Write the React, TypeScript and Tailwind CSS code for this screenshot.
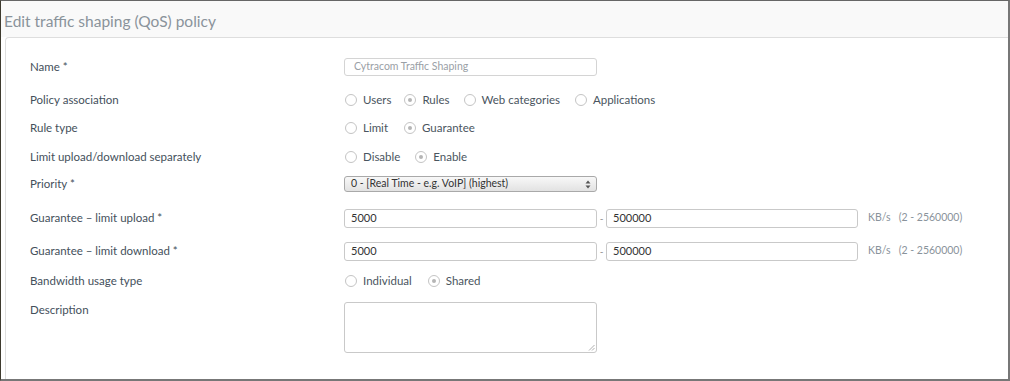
import React from 'react';

function Radio({ label, checked = false, className = '' }: { label: string; checked?: boolean; className?: string }) {
  return (
    <label className={`flex items-center gap-[6px] ${className}`}>
      <span className="w-[12px] h-[12px] rounded-full border border-[#c4c4c4] bg-white flex items-center justify-center">
        {checked && <span className="w-[4px] h-[4px] rounded-full bg-[#b5b5b5]" />}
      </span>
      <span className="text-[11.5px] text-[#4a5560]">{label}</span>
    </label>
  );
}

function Row({ label, children, className = '' }: { label: string; children: React.ReactNode; className?: string }) {
  return (
    <div className={`flex items-center h-[20px] ${className}`}>
      <div className="w-[314px] text-[11.5px] text-[#44505b]">{label}</div>
      <div className="flex items-center">{children}</div>
    </div>
  );
}

function TextBox({ value, w = 'w-[253px]' }: { value: string; w?: string }) {
  return (
    <div className={`${w} h-[19px] border border-[#c9c9c9] rounded-[3px] bg-white flex items-center pl-[6px] text-[11px] text-[#333]`}>
      {value}
    </div>
  );
}

export default function App() {
  return (
    <div className="w-[1010px] h-[381px] flex flex-col border-t border-l border-t-[#666] border-l-[#3d3a2e] border-r-2 border-b-2 border-r-[#777] border-b-[#777] bg-white overflow-hidden" style={{ fontFamily: 'Lato, "Noto Sans", sans-serif' }}>
      {/* header */}
      <div className="h-[36px] bg-[#f9f9f9] flex items-center pl-[3px] pt-[6px]">
        <h1 className="text-[15.5px] text-[#8a939b]">Edit traffic shaping (QoS) policy</h1>
      </div>

      {/* form panel */}
      <div className="flex-1 ml-[4px] border-l border-t border-[#dedede] rounded-tl-[4px] pl-[24px] pt-[19px]">
        <Row label="Name *">
          <div className="w-[253px] h-[18px] border border-[#d4d4d4] rounded-[3px] flex items-center pl-[9px] text-[10.5px] text-[#9aa0a6]">
            Cytracom Traffic Shaping
          </div>
        </Row>

        <Row label="Policy association" className="mt-[13px]">
          <Radio label="Users" className="ml-[1px]" />
          <Radio label="Rules" checked className="ml-[13px]" />
          <Radio label="Web categories" className="ml-[14px]" />
          <Radio label="Applications" className="ml-[15px]" />
        </Row>

        <Row label="Rule type" className="mt-[8px]">
          <Radio label="Limit" className="ml-[1px]" />
          <Radio label="Guarantee" checked className="ml-[16px]" />
        </Row>

        <Row label="Limit upload/download separately" className="mt-[9px]">
          <Radio label="Disable" className="ml-[1px]" />
          <Radio label="Enable" checked className="ml-[15px]" />
        </Row>

        <Row label="Priority *" className="mt-[7px]">
          <div className="w-[253px] h-[16px] border border-[#a9a9a9] rounded-[3px] bg-gradient-to-b from-[#f8f8f8] to-[#e2e2e2] flex items-center justify-between pl-[6px] pr-[5px] text-[10.5px] text-[#333]">
            <span>0 - [Real Time - e.g. VoIP] (highest)</span>
            <svg width="6" height="9" viewBox="0 0 6 9">
              <path d="M3 0.5 L5.5 3.5 H0.5 Z" fill="#555" />
              <path d="M3 8.5 L5.5 5.5 H0.5 Z" fill="#555" />
            </svg>
          </div>
        </Row>

        <Row label="Guarantee – limit upload *" className="mt-[14px]">
          <TextBox value="5000" />
          <span className="w-[9px] text-center text-[10px] text-[#888]">-</span>
          <TextBox value="500000" w="w-[252px]" />
          <span className="ml-[10px] text-[10.5px] text-[#8a939b]">KB/s</span>
          <span className="ml-[8px] text-[10.5px] text-[#8a939b]">(2 - 2560000)</span>
        </Row>

        <Row label="Guarantee – limit download *" className="mt-[13px]">
          <TextBox value="5000" />
          <span className="w-[9px] text-center text-[10px] text-[#888]">-</span>
          <TextBox value="500000" w="w-[252px]" />
          <span className="ml-[10px] text-[10.5px] text-[#8a939b]">KB/s</span>
          <span className="ml-[8px] text-[10.5px] text-[#8a939b]">(2 - 2560000)</span>
        </Row>

        <Row label="Bandwidth usage type" className="mt-[10px]">
          <Radio label="Individual" className="ml-[1px]" />
          <Radio label="Shared" checked className="ml-[16px]" />
        </Row>

        <div className="flex items-start mt-[11px]">
          <div className="w-[314px] text-[11.5px] leading-[14px] text-[#44505b] pt-[1px]">Description</div>
          <div className="relative w-[253px] h-[51px] border border-[#c9c9c9] rounded-[3px] bg-white">
            <svg className="absolute right-[1px] bottom-[1px]" width="7" height="7" viewBox="0 0 7 7">
              <path d="M6.5 1 L1 6.5 M6.5 4 L4 6.5" stroke="#999" strokeWidth="0.8" />
            </svg>
          </div>
        </div>
      </div>
    </div>
  );
}
